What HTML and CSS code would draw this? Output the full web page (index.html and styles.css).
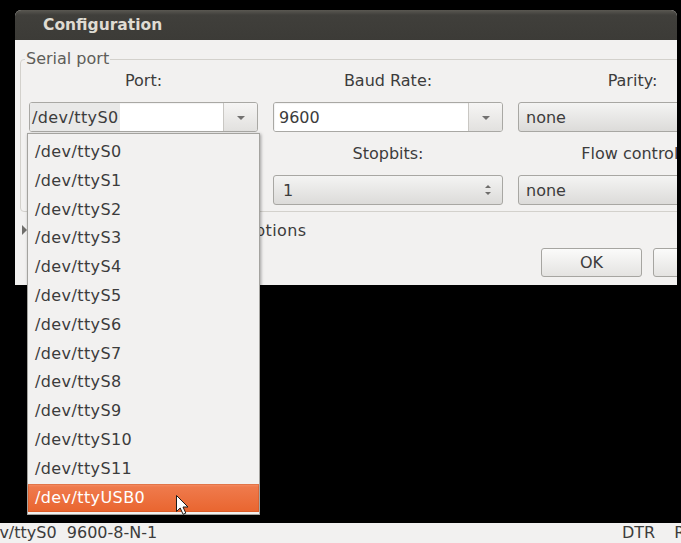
FILE: index.html
```html
<!DOCTYPE html>
<html>
<head>
<meta charset="utf-8">
<link rel="stylesheet" href="styles.css">
</head>
<body>
<div class="screen">
  <div class="desktop">
    <div class="dialog">
      <div class="titlebar">Configuration</div>
      <div class="dialog-body">
        <fieldset class="frame">
          <legend>Serial port</legend>
          <div class="grid">
            <div class="field">
              <div class="label">Port:</div>
              <div class="combo">
                <div class="entry port"><span class="sel">/dev/ttyS0</span></div>
                <div class="combo-btn"><span class="arrow-down"></span></div>
              </div>
            </div>
            <div class="field">
              <div class="label">Baud Rate:</div>
              <div class="combo">
                <div class="entry">9600</div>
                <div class="combo-btn"><span class="arrow-down"></span></div>
              </div>
            </div>
            <div class="field">
              <div class="label">Parity:</div>
              <div class="dropdown">none</div>
            </div>
            <div class="field">
              <div class="label">Bits:</div>
              <div class="dropdown spin">8<span class="updown"><span class="up"></span><span class="down"></span></span></div>
            </div>
            <div class="field">
              <div class="label">Stopbits:</div>
              <div class="dropdown spin">1<span class="updown"><span class="up"></span><span class="down"></span></span></div>
            </div>
            <div class="field">
              <div class="label">Flow control:</div>
              <div class="dropdown">none</div>
            </div>
          </div>
        </fieldset>
        <div class="expander"><span class="tri"></span><span class="exp-label">Advanced Configuration Options</span></div>
        <div class="buttons">
          <button class="btn">OK</button>
          <button class="btn">Cancel</button>
        </div>
      </div>
    </div>
  </div>
  <div class="statusbar">
    <span class="status-left">/dev/ttyS0  9600-8-N-1</span>
    <span class="status-right"><span class="sig">DTR</span><span class="sig">RTS</span></span>
  </div>

  <div class="menu">
    <div class="item">/dev/ttyS0</div>
    <div class="item">/dev/ttyS1</div>
    <div class="item">/dev/ttyS2</div>
    <div class="item">/dev/ttyS3</div>
    <div class="item">/dev/ttyS4</div>
    <div class="item">/dev/ttyS5</div>
    <div class="item">/dev/ttyS6</div>
    <div class="item">/dev/ttyS7</div>
    <div class="item">/dev/ttyS8</div>
    <div class="item">/dev/ttyS9</div>
    <div class="item">/dev/ttyS10</div>
    <div class="item">/dev/ttyS11</div>
    <div class="item active">/dev/ttyUSB0</div>
  </div>

  <svg class="cursor" width="15" height="22" viewBox="0 0 15 22">
    <path d="M1.5 1.5 L1.5 17.5 L5.2 14 L8.1 20.3 L10.8 19.1 L8 13 L13 13 Z" fill="#ffffff" stroke="#1a1a1a" stroke-width="1" stroke-linejoin="round"/>
  </svg>
</div>
</body>
</html>
```

FILE: styles.css
```css
html, body {
  margin: 0;
  padding: 0;
  background: #000;
}
body {
  font-family: "DejaVu Sans", "Liberation Sans", sans-serif;
  font-size: 16px;
  color: #3c3c3c;
}
.screen {
  position: relative;
  width: 681px;
  height: 543px;
  display: flex;
  flex-direction: column;
  overflow: hidden;
}
.desktop {
  flex: 1;
  background: #000;
  padding: 10px 0 0 15px;
}
.dialog {
  width: 662px;
  overflow: hidden;
  border-radius: 6px 6px 0 0;
  background: #f2f1f0;
}
.titlebar {
  height: 30px;
  line-height: 31px;
  padding-left: 28px;
  background: linear-gradient(#5a5852, #403f3b 5px, #3c3b37);
  color: #dfdbd2;
  font-weight: bold;
  font-size: 15.5px;
}
.dialog-body {
  width: 747px;
  box-sizing: border-box;
  padding: 11px 6px 8px 5px;
}
.frame {
  margin: 0;
  padding: 4px 0 6px 4px;
  border: 1px solid #d3d1cc;
  border-radius: 4px;
  min-width: 0;
}
.frame legend {
  padding: 0 1px;
  line-height: 16px;
  color: #5e5d59;
}
.grid {
  display: grid;
  grid-template-columns: 229px 230px 229px;
  column-gap: 15px;
  row-gap: 12px;
  margin-left: 4px;
}
.field {
  display: flex;
  flex-direction: column;
}
.label {
  text-align: center;
  line-height: 20px;
  margin-bottom: 11px;
  white-space: nowrap;
}
.combo {
  display: flex;
  height: 30px;
  box-sizing: border-box;
  border: 1px solid #a9a8a4;
  border-radius: 3px;
  overflow: hidden;
}
.entry {
  flex: 1;
  background: #fff;
  display: flex;
  align-items: center;
  padding-left: 5px;
  box-shadow: inset 1px 1px 1px rgba(0,0,0,0.05);
}
.entry.port {
  padding-left: 0;
  align-items: stretch;
}
.sel {
  display: flex;
  align-items: center;
  background: #e9e9e8;
  padding: 0 1px 0 2px;
  letter-spacing: 0.4px;
}
.combo-btn {
  width: 33px;
  border-left: 1px solid #c9c7c3;
  background: linear-gradient(#f6f5f4, #e2e1df);
  display: flex;
  align-items: center;
  justify-content: center;
}
.arrow-down {
  width: 0;
  height: 0;
  border-left: 4px solid transparent;
  border-right: 4px solid transparent;
  border-top: 4px solid #727170;
  margin-top: 1px;
}
.dropdown {
  height: 30px;
  box-sizing: border-box;
  border: 1px solid #a8a7a3;
  border-radius: 3px;
  background: linear-gradient(#f4f4f3, #dcdbd9);
  padding-left: 7px;
  display: flex;
  align-items: center;
}
.spin {
  padding-left: 9px;
}
.updown {
  margin-left: auto;
  margin-right: 11px;
  display: flex;
  flex-direction: column;
  gap: 4px;
}
.up, .down {
  width: 0;
  height: 0;
  border-left: 3px solid transparent;
  border-right: 3px solid transparent;
}
.up { border-bottom: 3px solid #6e6d6b; }
.down { border-top: 3px solid #6e6d6b; }

.expander {
  margin-top: 9px;
  height: 20px;
  line-height: 20px;
  display: flex;
  align-items: center;
  white-space: nowrap;
}
.tri {
  width: 0;
  height: 0;
  margin-left: 2px;
  border-top: 5px solid transparent;
  border-bottom: 5px solid transparent;
  border-left: 5px solid #6f6e6b;
  margin-top: -2px;
}
.exp-label {
  margin-left: 8px;
  letter-spacing: 0.4px;
}
.buttons {
  margin-top: 7px;
  display: flex;
  justify-content: flex-end;
  gap: 11px;
  margin-right: 2px;
}
.btn {
  width: 101px;
  height: 29px;
  box-sizing: border-box;
  border: 1px solid #a6a5a1;
  border-radius: 3px;
  background: linear-gradient(#fbfbfa, #e4e3e1);
  font-family: inherit;
  font-size: 16px;
  color: #3c3c3c;
  padding: 0;
}
.statusbar {
  height: 20px;
  background: #f2f1f0;
  display: flex;
  align-items: center;
  line-height: 20px;
  white-space: nowrap;
  overflow: hidden;
}
.status-left {
  flex: 1;
  margin-left: -26px;
  white-space: pre;
}
.status-right {
  width: 59px;
  flex: none;
  overflow: hidden;
  display: flex;
}
.sig {
  margin-right: 19px;
}
.menu {
  position: absolute;
  left: 27px;
  top: 133px;
  width: 233px;
  box-sizing: border-box;
  border: 1px solid #a4a39f;
  background: #f2f1f0;
  padding: 4px 0 2px;
  box-shadow: 1px 1px 3px rgba(0,0,0,0.35);
}
.item {
  height: 28.8px;
  line-height: 28.8px;
  padding-left: 7px;
  letter-spacing: 0.4px;
  white-space: nowrap;
}
.item.active {
  background: linear-gradient(#f6916a, #ef7a4c 3px, #e9652f);
  color: #fff;
  box-shadow: inset 0 0 0 1px rgba(200,80,30,0.4);
}
.cursor {
  position: absolute;
  left: 175px;
  top: 494px;
}
```
